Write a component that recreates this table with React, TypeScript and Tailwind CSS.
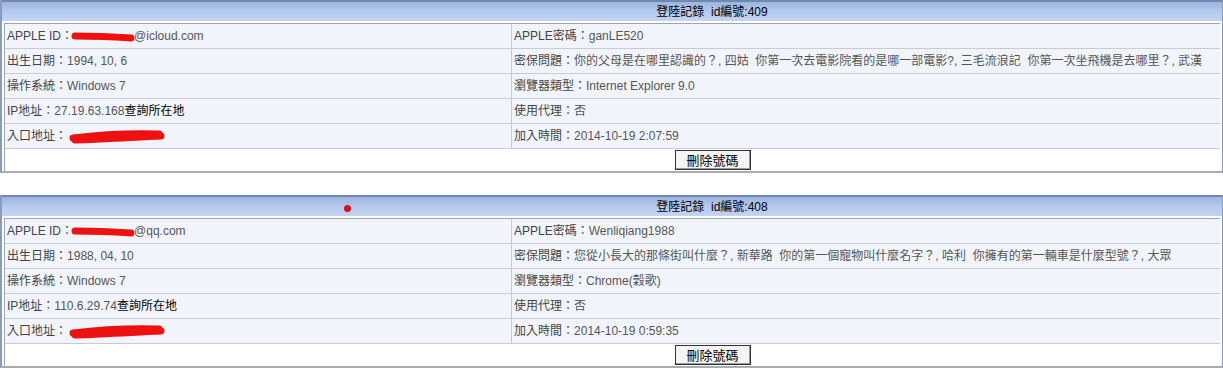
const records = [
  {
    id: 409,
    email: "@icloud.com",
    password: "ganLE520",
    birth: "1994, 10, 6",
    question:
      "你的父母是在哪里認識的？, 四姑  你第一次去電影院看的是哪一部電影?, 三毛流浪記  你第一次坐飛機是去哪里？, 武漢",
    os: "Windows 7",
    browser: "Internet Explorer 9.0",
    ip: "27.19.63.168",
    proxy: "否",
    time: "2014-10-19 2:07:59",
    dot: false,
  },
  {
    id: 408,
    email: "@qq.com",
    password: "Wenliqiang1988",
    birth: "1988, 04, 10",
    question:
      "您從小長大的那條街叫什麼？, 新華路  你的第一個寵物叫什麼名字？, 哈利  你擁有的第一輛車是什麼型號？, 大眾",
    os: "Windows 7",
    browser: "Chrome(穀歌)",
    ip: "110.6.29.74",
    proxy: "否",
    time: "2014-10-19 0:59:35",
    dot: true,
  },
];

// red marker scribbles that hide the account / url
function Scribble({ w, big }: { w: number; big?: boolean }) {
  const h = big ? 18 : 12;
  const d = big
    ? `M6 11 C ${w * 0.3} 8, ${w * 0.6} 6, ${w - 8} 7 M8 13 C ${w * 0.4} 12, ${w * 0.7} 10, ${w - 6} 9`
    : `M5 5 C ${w * 0.4} 5, ${w * 0.7} 6, ${w - 5} 7`;
  return (
    <svg width={w} height={h} viewBox={`0 0 ${w} ${h}`} className="inline-block align-middle">
      <path
        d={d}
        fill="none"
        stroke="#ee1111"
        strokeWidth={big ? 7 : 7}
        strokeLinecap="round"
      />
    </svg>
  );
}

function Cell({ children, right }: { children: React.ReactNode; right?: boolean }) {
  return (
    <div
      className={
        "flex h-[25px] items-center whitespace-pre bg-[#f1f5fb] px-[2px] text-[12px] text-[#555] border-b border-[#c8ccd2] " +
        (right ? "border-l" : "")
      }
    >
      {children}
    </div>
  );
}

function Label({ children }: { children: React.ReactNode }) {
  return <span className="text-[#444]">{children}：</span>;
}

function Panel({ r }: { r: (typeof records)[number] }) {
  return (
    <div className="border-l-2 border-r border-b-2 border-[#8a9cbc] border-b-[#a9adb3]">
      <div className="relative flex h-[21px] items-center justify-center border-t-2 border-[#7088b0] bg-gradient-to-b from-[#9db4de] via-[#b4c9ee] to-[#c3d4f3] pl-[200px] text-[12px] text-black">
        登陸記錄&nbsp;&nbsp;id編號:{r.id}
        {r.dot && <span className="absolute left-[342px] top-[8px] h-[7px] w-[7px] rounded-full bg-[#e01010]" />}
      </div>
      <div className="mx-[2px] mt-[2px] border-l border-t border-[#9aa6b6]">
        <div className="grid grid-cols-[506px_1fr]">
          <Cell>
            <Label>APPLE ID</Label>
            <span className="-ml-[3px] -mr-[2px]">
              <Scribble w={66} />
            </span>
            {r.email}
          </Cell>
          <Cell right>
            <Label>APPLE密碼</Label>
            {r.password}
          </Cell>
          <Cell>
            <Label>出生日期</Label>
            {r.birth}
          </Cell>
          <Cell right>
            <Label>密保問題</Label>
            {r.question}
          </Cell>
          <Cell>
            <Label>操作系統</Label>
            {r.os}
          </Cell>
          <Cell right>
            <Label>瀏覽器類型</Label>
            {r.browser}
          </Cell>
          <Cell>
            <Label>IP地址</Label>
            {r.ip}
            <span className="text-black">查詢所在地</span>
          </Cell>
          <Cell right>
            <Label>使用代理</Label>
            {r.proxy}
          </Cell>
          <Cell>
            <Label>入口地址</Label>
            <Scribble w={100} big />
          </Cell>
          <Cell right>
            <Label>加入時間</Label>
            {r.time}
          </Cell>
        </div>
        <div className="flex h-[22px] items-center justify-center bg-white pl-[200px]">
          <button className="h-[20px] w-[76px] border border-[#333] bg-[#f4f4f4] text-[13px] leading-none text-black shadow-[inset_-1px_-1px_0_#999]">
            刪除號碼
          </button>
        </div>
      </div>
    </div>
  );
}

export default function App() {
  return (
    <div
      className="flex w-[1223px] flex-col gap-[22px] bg-white"
      style={{ fontFamily: '"Liberation Sans", "Noto Sans CJK TC", sans-serif' }}
    >
      {records.map((r) => (
        <Panel key={r.id} r={r} />
      ))}
    </div>
  );
}
